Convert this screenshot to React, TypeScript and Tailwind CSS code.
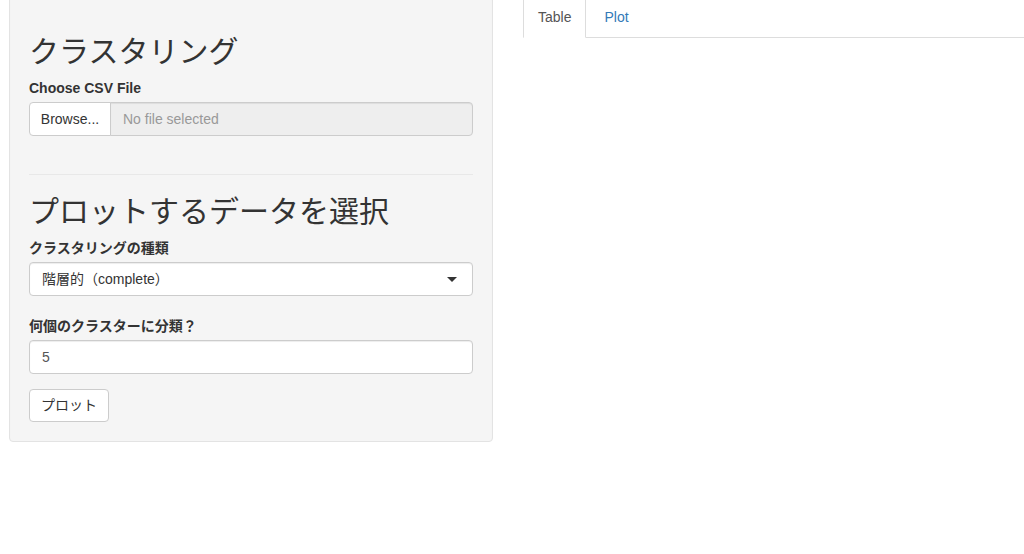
import { useState } from 'react'

const labelCls = 'block h-[20px] leading-[20px] font-bold text-[14px] text-[#333]'
const controlCls =
  'h-[34px] w-full rounded-[4px] border border-[#ccc] bg-white px-[12px] text-[14px] text-[#555] shadow-[inset_0_1px_1px_rgba(0,0,0,0.075)] flex items-center'

export default function App() {
  const [tab, setTab] = useState('Table')

  return (
    <div className="h-[554px] w-[1024px] overflow-hidden bg-white font-['Liberation_Sans','Noto_Sans_CJK_JP',sans-serif] text-[14px] text-[#333]">
      <div className="-mt-[4px] flex">
        {/* sidebar */}
        <div className="w-[493px] shrink-0 pl-[9px]">
          <div className="rounded-[4px] border border-[#e3e3e3] bg-[#f5f5f5] p-[19px] shadow-[inset_0_1px_1px_rgba(0,0,0,0.05)]">
            <h2 className="mt-[19px] mb-[10px] text-[30px] leading-[33px] font-normal text-[#333]">クラスタリング</h2>
            <label className={`${labelCls} mb-[4px]`}>Choose CSV File</label>
            <div className="flex h-[34px]">
              <button className="h-full w-[82px] rounded-l-[4px] border border-[#ccc] bg-white text-[14px] text-[#333]">Browse...</button>
              <div className="-ml-px flex h-full flex-1 items-center rounded-r-[4px] border border-[#ccc] bg-[#eee] px-[12px] text-[14px] text-[#999] shadow-[inset_0_1px_1px_rgba(0,0,0,0.075)]">
                No file selected
              </div>
            </div>

            <hr className="mt-[38px] mb-[20px] border-t border-[#e8e8e8]" />

            <h2 className="mb-[10px] text-[30px] leading-[33px] font-normal text-[#333]">プロットするデータを選択</h2>
            <label className={`${labelCls} mb-[4px]`}>クラスタリングの種類</label>
            <div className={`${controlCls} justify-between`}>
              <span className="text-[#333]">階層的（complete）</span>
              <span className="mr-[3px] h-0 w-0 border-x-[5px] border-t-[5px] border-x-transparent border-t-[#333]" />
            </div>

            <label className={`${labelCls} mt-[20px] mb-[4px]`}>何個のクラスターに分類？</label>
            <div className={controlCls}>5</div>

            <button className="mt-[15px] h-[33px] w-[80px] rounded-[4px] border border-[#ccc] bg-white text-[14px] text-[#333]">プロット</button>
          </div>
        </div>

        {/* main panel */}
        <div className="ml-[30px] flex-1">
          <ul className="flex border-b border-[#ddd]">
            {['Table', 'Plot'].map(name => (
              <li key={name} className="-mb-px mr-[3px]">
                <button
                  onClick={() => setTab(name)}
                  className={
                    tab === name
                      ? 'h-[42px] rounded-t-[4px] border border-[#ddd] border-b-transparent bg-white px-[14px] leading-[20px] text-[#555]'
                      : 'h-[42px] rounded-t-[4px] border border-transparent px-[14px] leading-[20px] text-[#337ab7]'
                  }
                >
                  {name}
                </button>
              </li>
            ))}
          </ul>
        </div>
      </div>
    </div>
  )
}
